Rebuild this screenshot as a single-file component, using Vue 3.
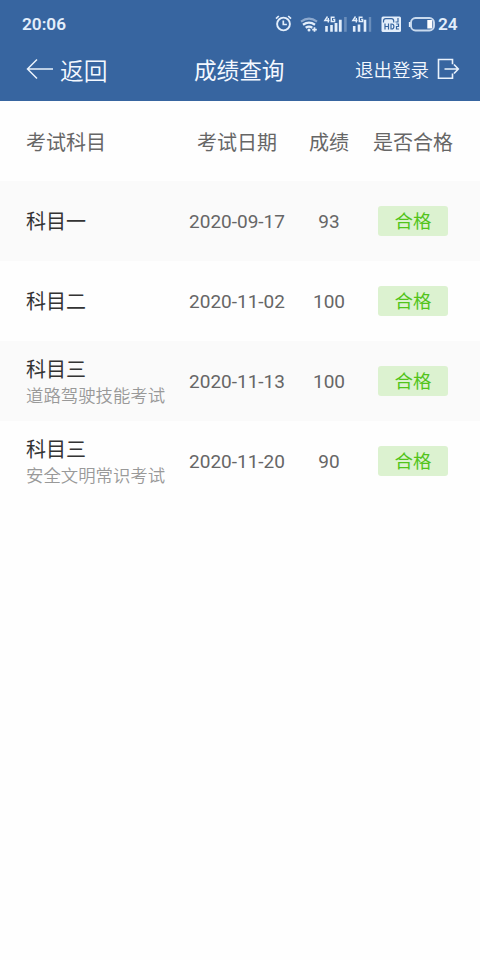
<!-- 成绩查询页面 -->

<script setup>
  import { ref } from 'vue';

  // 各科目考试成绩
  const results = ref([
    { id: 1, subject: '科目一', detail: '', date: '2020-09-17', score: 93, status: '合格' },
    { id: 2, subject: '科目二', detail: '', date: '2020-11-02', score: 100, status: '合格' },
    { id: 3, subject: '科目三', detail: '道路驾驶技能考试', date: '2020-11-13', score: 100, status: '合格' },
    { id: 4, subject: '科目三', detail: '安全文明常识考试', date: '2020-11-20', score: 90, status: '合格' },
  ]);
</script>

<template>
  <div class="page">
    <header class="top">
      <!-- 状态栏 -->
      <div class="status-bar">
        <span class="time">20:06</span>
        <svg class="status-icons" width="161" height="20" viewBox="0 0 161 20" fill="none" stroke="#e3eefb">
          <!-- 闹钟 -->
          <circle cx="8.5" cy="10" r="6.4" stroke-width="1.9" />
          <path d="M8.3 6.5v4h3.6M1 4.6l2.8-2.6M16 4.6L13.2 2" stroke-width="1.7" />
          <!-- WiFi -->
          <path d="M26 7.6q8-5.8 16 0" stroke-width="2.2" opacity=".5" />
          <path d="M28 10.8q6-4.2 12 0M30.7 13.8q3.3-2.4 6.6 0" stroke-width="2.3" />
          <circle cx="34" cy="16" r="1.5" fill="#e3eefb" stroke="none" />
          <path d="M37.2 15.6h4.6M39.5 13.2v4.6" stroke-width="1.7" />
          <!-- 信号 -->
          <path d="M52.5 2.5l-2.7 4h4.7M53.3 4v4.4M59.6 3.2h-3.3v4.3h3.3V5.4h-1.5" stroke-width="1.4" />
          <path d="M51.5 12v5.8M56.5 11v6.8" stroke-width="2.6" />
          <path d="M61 9v8.8M65.3 5.8v12" stroke-width="2.8" />
          <path d="M70.4 3v14.8" stroke-width="2.6" opacity=".3" />
          <path d="M80.5 2.5l-2.7 4h4.7M81.3 4v4.4M87.6 3.2h-3.3v4.3h3.3V5.4h-1.5" stroke-width="1.4" />
          <path d="M79.2 12v5.8M84 10.5v7.3M90 5.8v12" stroke-width="2.6" />
          <path d="M95 3v14.8" stroke-width="2.4" opacity=".3" />
          <!-- HD -->
          <rect x="106.5" y="2.5" width="19.5" height="15.5" rx="1.5" fill="#e3eefb" stroke="none" />
          <g stroke="#3765a0" stroke-width="1.2">
            <path d="M108.5 8.5V7q0-2.3 2.3-2.3h5.6q2.3 0 2.3 2.3v1.5M110 9.5v6M113.5 9.5v6M110 12.5h3.5M116 10v5h.7q2.2 0 2.2-2.5t-2.2-2.5zM121.3 10h2.2v2.5h-2v2.5h2.4M123 4v4h-2.5" />
          </g>
          <!-- 电池 -->
          <rect x="136" y="4" width="23" height="12.5" rx="4.5" stroke-width="1.9" opacity=".85" />
          <rect x="152.3" y="6" width="5" height="8.5" fill="#fff" stroke="none" />
          <path d="M134.6 8v5" stroke-width="1.5" />
        </svg>
        <span class="battery">24</span>
      </div>

      <!-- 导航栏 -->
      <nav class="nav-bar">
        <a class="back">
          <svg width="28" height="22" viewBox="0 0 28 22" fill="none" stroke="#e9f2fc" stroke-width="1.5">
            <path d="M11 1.5L1.5 11l9.5 9.5M1.5 11H27" />
          </svg>
          <span>返回</span>
        </a>
        <h1 class="title">成绩查询</h1>
        <a class="logout">
          <span>退出登录</span>
          <svg width="23" height="22" viewBox="0 0 23 22" fill="none" stroke="#e9f2fc" stroke-width="1.6">
            <path d="M15.5 6.3V1.5h-14v18.7h14v-4.7M7.5 11H21M17 6.5l4.3 4.5-4.3 4.5" />
          </svg>
        </a>
      </nav>
    </header>

    <!-- 成绩列表 -->
    <main class="list">
      <div class="row head">
        <span class="subject">考试科目</span>
        <span>考试日期</span>
        <span>成绩</span>
        <span>是否合格</span>
      </div>
      <div v-for="item in results" :key="item.id" class="row">
        <div class="subject">
          <p class="name">{{ item.subject }}</p>
          <p v-if="item.detail" class="detail">{{ item.detail }}</p>
        </div>
        <span class="number">{{ item.date }}</span>
        <span class="number">{{ item.score }}</span>
        <span class="tag">{{ item.status }}</span>
      </div>
    </main>
  </div>
</template>

<style>
body {
  margin: 0;
  background-color: #fff;
}
</style>

<style scoped>
.page {
  min-height: 960px;
  background-color: #fefefe;
  font-family: Roboto, "Noto Sans CJK SC", sans-serif;
}

.top {
  height: 101px;
  background-color: #3765a0;
  color: #f3f8ff;
}

.status-bar {
  display: flex;
  align-items: center;
  height: 48px;
  padding: 0 22px;
  box-sizing: border-box;
  font-size: 17.2px;
  font-weight: 600;
  color: #e3eefb;
}

.time {
  flex: 1;
}

.status-icons {
  flex: none;
}

.battery {
  width: 20px;
  margin-left: 2px;
}

.nav-bar {
  display: grid;
  grid-template-columns: 168px 91px 1fr;
  align-items: center;
  height: 42px;
  padding: 0 20px 0 26px;
}

.back,
.logout {
  display: flex;
  align-items: center;
}

.back {
  gap: 6px;
  font-size: 23.8px;
  font-weight: 350;
}

.title {
  margin: 0;
  font-size: 22.6px;
  font-weight: 400;
}

.logout {
  justify-content: flex-end;
  gap: 8px;
  font-size: 18.5px;
  font-weight: 350;
}

.row {
  display: grid;
  grid-template-columns: 153px 116px 68px 100px;
  align-items: center;
  justify-items: center;
  height: 80px;
  padding-left: 26px;
  color: #666;
}

.row:nth-child(even) {
  background-color: #fafafa;
}

.head {
  font-size: 20px;
}

.subject {
  justify-self: start;
}

.row:not(.head) .subject {
  padding-top: 2px;
}

.name,
.detail {
  margin: 0;
  white-space: nowrap;
}

.name {
  font-size: 20px;
  line-height: 28px;
  color: #333;
}

.detail {
  font-size: 17.4px;
  line-height: 25px;
  font-weight: 350;
  color: #999;
}

.number {
  font-size: 19px;
}

.tag {
  width: 70px;
  height: 30px;
  border-radius: 3px;
  background-color: #dcf2d0;
  color: #52c41a;
  font-size: 18.5px;
  line-height: 32px;
  text-align: center;
}
</style>
